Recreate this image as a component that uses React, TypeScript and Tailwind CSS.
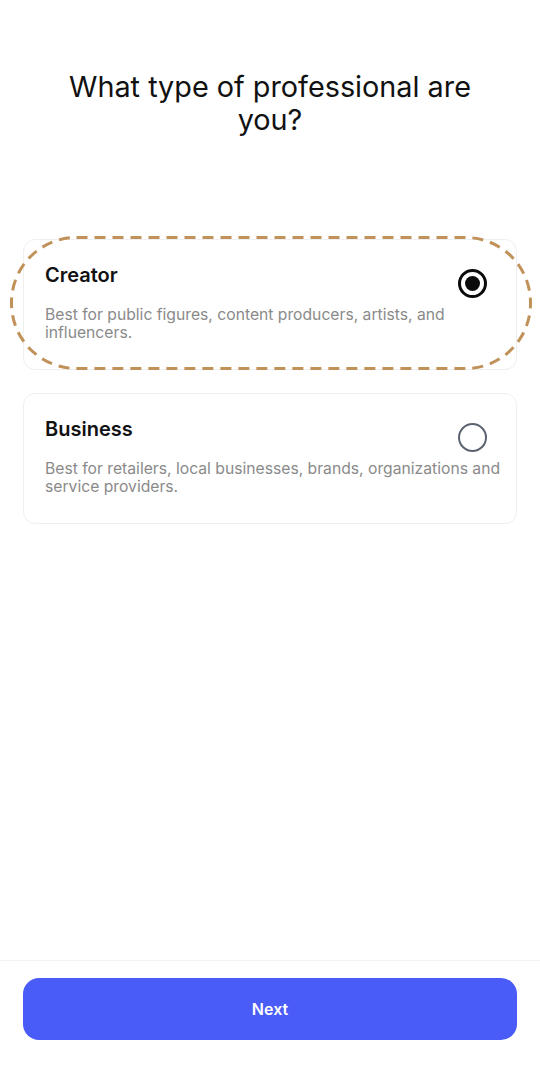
import { useState } from "react";

const options = [
  {
    id: "creator",
    title: "Creator",
    desc: "Best for public figures, content producers, artists, and influencers.",
  },
  {
    id: "business",
    title: "Business",
    desc: "Best for retailers, local businesses, brands, organizations and service providers.",
  },
];

function Radio({ checked }: { checked: boolean }) {
  return checked ? (
    <div className="w-[29px] h-[29px] rounded-full border-[3px] border-[#0b0b0b] flex items-center justify-center shrink-0">
      <div className="w-[15px] h-[15px] rounded-full bg-[#0b0b0b]" />
    </div>
  ) : (
    <div className="w-[29px] h-[29px] rounded-full border-[2.5px] border-[#5b6370] shrink-0" />
  );
}

export default function App() {
  const [selected, setSelected] = useState("creator");
  return (
    <div className="w-[540px] h-[1080px] bg-white flex flex-col font-['Inter',sans-serif] text-[#111]">
      <div className="flex-1 flex flex-col">
        <h1 className="pt-[70px] px-[50px] text-center text-[28.8px] leading-[33px] font-normal">
          What type of professional are you?
        </h1>
        <div className="relative mt-[103px] px-[23px] flex flex-col gap-[23px]">
          {options.map((o) => (
            <button
              key={o.id}
              onClick={() => setSelected(o.id)}
              className="h-[131px] rounded-[12px] border border-[#efefef] text-left pl-[21px] pr-[14px] pt-[22px] flex flex-col"
            >
              <div className="flex items-start justify-between pr-[15px]">
                <span className="text-[20px] leading-[24px] font-semibold mt-[1px]">
                  {o.title}
                </span>
                <div className="mt-[7px]">
                  <Radio checked={selected === o.id} />
                </div>
              </div>
              <p className="mt-[8px] text-[15.7px] leading-[18px] text-[#8a8a8a]">
                {o.desc}
              </p>
            </button>
          ))}
          <svg
            className="absolute left-[10px] top-[-3px] pointer-events-none"
            width="522"
            height="134"
            viewBox="0 0 522 134"
          >
            <rect
              x="1.5"
              y="1.5"
              width="519"
              height="131"
              rx="65"
              fill="none"
              stroke="#c0925a"
              strokeWidth="3"
              strokeDasharray="11 7"
            />
          </svg>
        </div>
      </div>
      <div className="border-t border-[#f2f2f2] px-[23px] pt-[17px] pb-[40px]">
        <button className="w-full h-[62px] rounded-[16px] bg-[#4a5cf8] text-white text-[16px] font-semibold">
          Next
        </button>
      </div>
    </div>
  );
}
